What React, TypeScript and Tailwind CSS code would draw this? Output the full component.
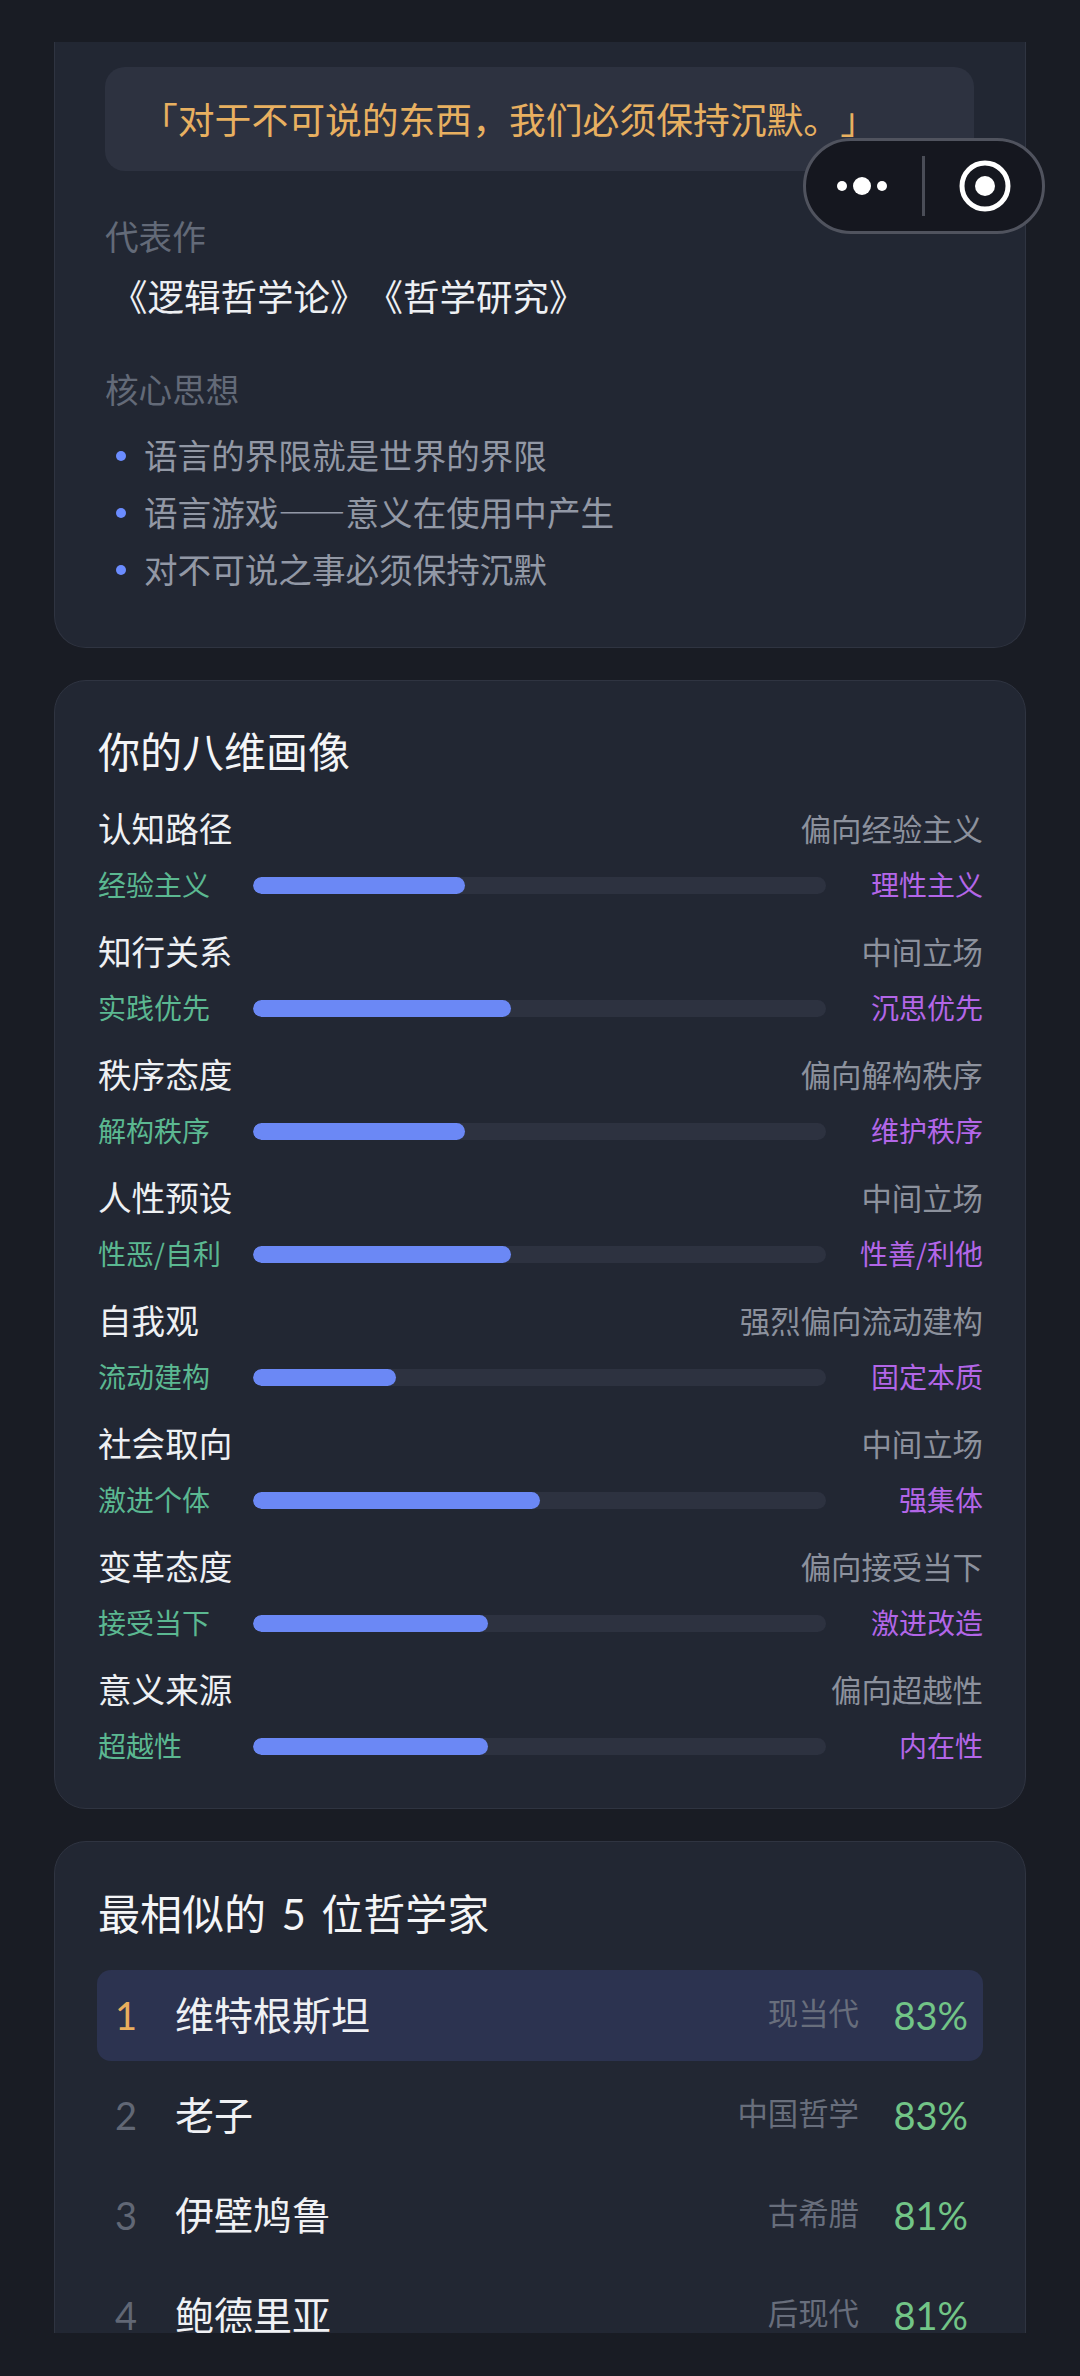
const FONT = "font-['Noto_Sans_CJK_SC','Noto_Sans',sans-serif] [text-spacing-trim:space-all]";
const NUM = "font-['Lato',sans-serif]";

const IDEAS = ["语言的界限就是世界的界限", "语言游戏——意义在使用中产生", "对不可说之事必须保持沉默"];

const DIMENSIONS = [
  { name: "认知路径", verdict: "偏向经验主义", left: "经验主义", right: "理性主义", pct: 37 },
  { name: "知行关系", verdict: "中间立场", left: "实践优先", right: "沉思优先", pct: 45 },
  { name: "秩序态度", verdict: "偏向解构秩序", left: "解构秩序", right: "维护秩序", pct: 37 },
  { name: "人性预设", verdict: "中间立场", left: "性恶/自利", right: "性善/利他", pct: 45 },
  { name: "自我观", verdict: "强烈偏向流动建构", left: "流动建构", right: "固定本质", pct: 25 },
  { name: "社会取向", verdict: "中间立场", left: "激进个体", right: "强集体", pct: 50 },
  { name: "变革态度", verdict: "偏向接受当下", left: "接受当下", right: "激进改造", pct: 41 },
  { name: "意义来源", verdict: "偏向超越性", left: "超越性", right: "内在性", pct: 41 },
];

const MATCHES = [
  { name: "维特根斯坦", era: "现当代", score: "83%" },
  { name: "老子", era: "中国哲学", score: "83%" },
  { name: "伊壁鸠鲁", era: "古希腊", score: "81%" },
  { name: "鲍德里亚", era: "后现代", score: "81%" },
];

function Capsule() {
  return (
    <div className="absolute left-[803px] top-[138px] flex h-[96px] w-[242px] items-center rounded-full border-[3px] border-[#50535e] bg-[#15171f]">
      <svg width="70" height="20" viewBox="0 0 70 20" className="ml-[31px] shrink-0" fill="#ffffff">
        <circle cx="5" cy="10" r="5" />
        <circle cx="25" cy="10" r="9" />
        <circle cx="45" cy="10" r="5" />
      </svg>
      <div className="ml-[15px] h-[60px] w-[3px] shrink-0 bg-[#4a4d57]" />
      <svg width="52" height="52" viewBox="0 0 52 52" className="ml-[34px] shrink-0">
        <circle cx="26" cy="26" r="23" fill="none" stroke="#ffffff" strokeWidth="5" />
        <circle cx="26" cy="26" r="10" fill="#ffffff" />
      </svg>
    </div>
  );
}

function DimensionRow({ item }: { item: (typeof DIMENSIONS)[number] }) {
  return (
    <div>
      <div className="flex items-center justify-between">
        <span className="text-[33.6px] leading-[44px] text-[#eef0f3]">{item.name}</span>
        <span className="text-[30.4px] leading-[44px] text-[#8c919d]">{item.verdict}</span>
      </div>
      <div className="mt-[15px] flex h-[40px] items-center">
        <span className="w-[155px] shrink-0 pb-[3px] text-[28px] leading-[40px] text-[#5bb891]">{item.left}</span>
        <div className="h-[17px] flex-1 overflow-hidden rounded-full bg-[#2d3240]">
          <div className="h-full rounded-full bg-[#6b88f5]" style={{ width: `${item.pct}%` }} />
        </div>
        <span className="w-[157px] shrink-0 pb-[3px] text-right text-[28px] leading-[40px] text-[#b366e8]">{item.right}</span>
      </div>
    </div>
  );
}

export default function App() {
  return (
    <div lang="zh-CN" className={`relative h-[2376px] w-[1080px] overflow-hidden bg-[#191c24] pt-[42px] ${FONT}`}>
      <div className="ml-[54px] flex h-[2291px] w-[972px] flex-col gap-[32px] overflow-hidden">
        <section className="shrink-0 rounded-b-[32px] border border-t-0 border-[#2f3441] bg-[#222733] pb-[48px] pl-[50px] pr-[51px] pt-[25px]">
          <div className="flex h-[104px] items-center rounded-[20px] bg-[#2d3240] pl-[36px] text-[36.8px] text-[#e8b060]">
            「对于不可说的东西，我们必须保持沉默。」
          </div>
          <div className="mt-[43px] text-[33.6px] leading-[44px] text-[#636a78]">代表作</div>
          <div className="mt-[12px] pl-[6px] text-[36.5px] leading-[52px] text-[#eef0f3]">《逻辑哲学论》《哲学研究》</div>
          <div className="mt-[45px] text-[33.6px] leading-[44px] text-[#636a78]">核心思想</div>
          <ul className="mt-[15px] pb-[2px]">
            {IDEAS.map((idea) => (
              <li key={idea} className="flex items-center text-[33.6px] leading-[57px] text-[#9298a5]">
                <span className="ml-[11px] mr-[18px] mt-[3px] h-[10px] w-[10px] shrink-0 rounded-full bg-[#6b8cff]" />
                {idea}
              </li>
            ))}
          </ul>
        </section>

        <section className="shrink-0 rounded-[32px] border border-[#2f3441] bg-[#222733] pb-[42px] pl-[43px] pr-[42px] pt-[41px]">
          <h2 className="text-[42px] leading-[56px] text-[#f4f5f7]">你的八维画像</h2>
          <div className="mt-[28px] flex flex-col gap-[24px]">
            {DIMENSIONS.map((item) => (
              <DimensionRow key={item.name} item={item} />
            ))}
          </div>
        </section>

        <section className="shrink-0 rounded-[32px] border border-[#2f3441] bg-[#222733] pb-[40px] pl-[42px] pr-[42px] pt-[42px]">
          <h2 className="pl-[1px] text-[42px] leading-[56px] text-[#f4f5f7] [word-spacing:6px]">
            最相似的 <span className={NUM}>5</span> 位哲学家
          </h2>
          <div className="mt-[28px] flex flex-col gap-[9px]">
            {MATCHES.map((m, i) => (
              <div
                key={m.name}
                className={`flex h-[91px] items-center rounded-[14px] pl-[18px] pr-[15px] ${i === 0 ? "bg-[#2c3350]" : ""}`}
              >
                <span className={`w-[60px] shrink-0 text-[38px] ${NUM} ${i === 0 ? "text-[#e9ae5d]" : "text-[#616775]"}`}>
                  {i + 1}
                </span>
                <span className="flex-1 pb-[4px] text-[39px] text-[#f0f1f4]">{m.name}</span>
                <span className="pb-[5px] text-[30.4px] text-[#686e7c]">{m.era}</span>
                <span className={`w-[109px] text-right text-[38px] text-[#72c587] ${NUM}`}>{m.score}</span>
              </div>
            ))}
          </div>
        </section>
      </div>
      <Capsule />
    </div>
  );
}
